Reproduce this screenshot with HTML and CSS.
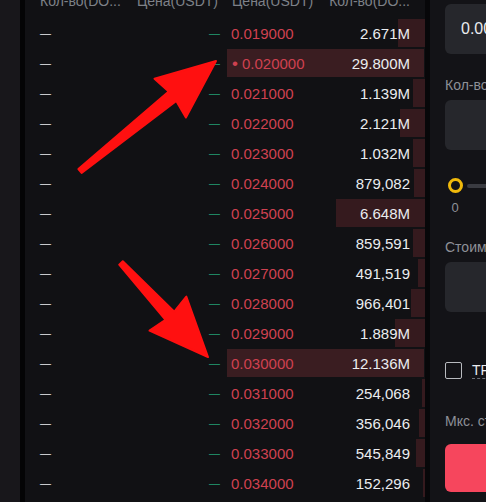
FILE: index.html
```html
<!DOCTYPE html>
<html lang="ru">
<head>
    <meta charset="UTF-8">
    <meta name="viewport" content="width=device-width, initial-scale=1.0">
    <title>Стакан DOGS/USDT</title>
    <link rel="stylesheet" href="styles.css">
</head>
<body>
    <div class="screen">
        <div class="edge"></div>
        <div class="edge-line"></div>

        <div class="book">
            <div class="book-head">
                <div class="head-bids"><span>Кол-во(DO...</span><span>Цена(USDT)</span></div>
                <div class="head-asks"><span>Цена(USDT)</span><span>Кол-во(DO...</span></div>
            </div>
            <div class="book-body">
                <div class="bids">
                    <div class="row"><span class="dash">—</span><span class="dash up">—</span></div>
                    <div class="row"><span class="dash">—</span><span class="dash up">—</span></div>
                    <div class="row"><span class="dash">—</span><span class="dash up">—</span></div>
                    <div class="row"><span class="dash">—</span><span class="dash up">—</span></div>
                    <div class="row"><span class="dash">—</span><span class="dash up">—</span></div>
                    <div class="row"><span class="dash">—</span><span class="dash up">—</span></div>
                    <div class="row"><span class="dash">—</span><span class="dash up">—</span></div>
                    <div class="row"><span class="dash">—</span><span class="dash up">—</span></div>
                    <div class="row"><span class="dash">—</span><span class="dash up">—</span></div>
                    <div class="row"><span class="dash">—</span><span class="dash up">—</span></div>
                    <div class="row"><span class="dash">—</span><span class="dash up">—</span></div>
                    <div class="row"><span class="dash">—</span><span class="dash up">—</span></div>
                    <div class="row"><span class="dash">—</span><span class="dash up">—</span></div>
                    <div class="row"><span class="dash">—</span><span class="dash up">—</span></div>
                    <div class="row"><span class="dash">—</span><span class="dash up">—</span></div>
                    <div class="row"><span class="dash">—</span><span class="dash up">—</span></div>
                </div>
                <div class="asks">
                    <div class="row"><i class="depth" style="width:27px"></i><span class="price">0.019000</span><span class="qty">2.671M</span></div>
                    <div class="row hit"><span class="price"><b class="mark">•</b>0.020000</span><span class="qty">29.800M</span></div>
                    <div class="row"><i class="depth" style="width:12px"></i><span class="price">0.021000</span><span class="qty">1.139M</span></div>
                    <div class="row"><i class="depth" style="width:25px"></i><span class="price">0.022000</span><span class="qty">2.121M</span></div>
                    <div class="row"><i class="depth" style="width:12px"></i><span class="price">0.023000</span><span class="qty">1.032M</span></div>
                    <div class="row"><i class="depth" style="width:11px"></i><span class="price">0.024000</span><span class="qty">879,082</span></div>
                    <div class="row"><i class="depth" style="width:89px"></i><span class="price">0.025000</span><span class="qty">6.648M</span></div>
                    <div class="row"><i class="depth" style="width:12px"></i><span class="price">0.026000</span><span class="qty">859,591</span></div>
                    <div class="row"><i class="depth" style="width:7px"></i><span class="price">0.027000</span><span class="qty">491,519</span></div>
                    <div class="row"><i class="depth" style="width:14px"></i><span class="price">0.028000</span><span class="qty">966,401</span></div>
                    <div class="row"><i class="depth" style="width:30px"></i><span class="price">0.029000</span><span class="qty">1.889M</span></div>
                    <div class="row hit"><span class="price">0.030000</span><span class="qty">12.136M</span></div>
                    <div class="row"><i class="depth" style="width:3px"></i><span class="price">0.031000</span><span class="qty">254,068</span></div>
                    <div class="row"><i class="depth" style="width:6px"></i><span class="price">0.032000</span><span class="qty">356,046</span></div>
                    <div class="row"><i class="depth" style="width:9px"></i><span class="price">0.033000</span><span class="qty">545,849</span></div>
                    <div class="row"><i class="depth" style="width:2px"></i><span class="price">0.034000</span><span class="qty">152,296</span></div>
                </div>
            </div>
        </div>

        <div class="divider"></div>

        <div class="panel">
            <div class="field">0.000000</div>
            <div class="label">Кол-во</div>
            <div class="field"></div>
            <div class="slider">
                <span class="knob"></span>
                <span class="track"></span>
            </div>
            <div class="tick">0</div>
            <div class="label">Стоимость</div>
            <div class="field"></div>
            <label class="check">
                <span class="box"></span>
                <span class="check-text">TP/SL</span>
            </label>
            <div class="label label-max">Мкс. стоимость</div>
            <div class="sell"></div>
        </div>
    </div>

    <!-- pointers drawn on top of the book -->
    <svg class="marks" width="486" height="502" viewBox="0 0 486 502">
        <polygon points="78.4,169.1 168.7,91.5 154.5,78.7 216,61 185.9,117.5 176.3,100.9 81.6,172.9" />
        <polygon points="119.2,264.7 165.5,319.9 149.5,330.6 208,357 186.3,296.6 174.3,311.7 122.8,261.3" />
    </svg>
</body>
</html>
```

FILE: styles.css
```css
* {
    box-sizing: border-box;
}
body {
    margin: 0;
    width: 486px;
    height: 502px;
    overflow: hidden;
    position: relative;
    background-color: #111114;
    font-family: "Liberation Sans", Arial, sans-serif;
}
.screen {
    display: flex;
    height: 502px;
}
.edge {
    width: 20px;
    flex: none;
    background-color: #18171b;
}
.edge-line {
    width: 5px;
    flex: none;
    background-color: #040405;
}

/* order book */
.book {
    width: 400px;
    flex: none;
}
.book-head {
    display: flex;
    height: 25px;
    margin-top: -7px;
    font-size: 14px;
    line-height: 16px;
    color: #7e8188;
    white-space: nowrap;
}
.head-bids {
    width: 202px;
    display: flex;
    justify-content: space-between;
    padding: 0 9px 0 15px;
}
.head-asks {
    width: 198px;
    display: flex;
    justify-content: space-between;
    padding: 0 15px 0 5px;
}
.book-body {
    display: flex;
}
.bids, .asks {
    display: flex;
    flex-direction: column;
}
.bids {
    width: 202px;
}
.asks {
    width: 198px;
}
.row {
    height: 30px;
    display: flex;
    align-items: center;
    justify-content: space-between;
    font-size: 15px;
}
.bids .row {
    padding: 0 7px 0 15px;
}
.asks .row {
    position: relative;
    padding: 0 15px 0 4px;
}
.dash {
    font-size: 11px;
    color: #eaecef;
}
.dash.up {
    color: #23a275;
}
.depth {
    position: absolute;
    right: 0;
    top: 1px;
    bottom: 1px;
    background-color: #351a1e;
}
.row.hit::before {
    content: "";
    position: absolute;
    left: 0;
    right: 1px;
    top: 1px;
    bottom: 1px;
    background-color: #3a1d21;
}
.price, .qty {
    position: relative;
}
.price {
    color: #cf4150;
}
.qty {
    color: #eaecef;
}
.mark {
    font-weight: normal;
    font-size: 17px;
    line-height: 15px;
    margin: 0 4px 0 1px;
}

/* order form */
.divider {
    width: 5px;
    flex: none;
    background-color: #070709;
}
.panel {
    flex: 1;
    min-width: 0;
    overflow: hidden;
    padding: 4px 0 0 15px;
    background-color: #131317;
    white-space: nowrap;
}
.field {
    width: 200px;
    height: 50px;
    display: flex;
    align-items: center;
    padding-left: 16px;
    border-radius: 6px;
    background-color: #26272c;
    font-size: 16px;
    color: #eaecef;
}
.label {
    margin: 23px 0 7px;
    font-size: 14px;
    line-height: 16px;
    color: #8e9097;
}
.slider {
    display: flex;
    align-items: center;
    width: 200px;
    margin-top: 28px;
    height: 15px;
}
.knob {
    flex: none;
    width: 15px;
    height: 15px;
    margin-left: 3px;
    border: 3px solid #f0b90b;
    border-radius: 50%;
    background-color: #131317;
}
.track {
    flex: none;
    width: 100px;
    height: 4px;
    margin-left: 4px;
    border-radius: 2px;
    background-color: #3a3b41;
}
.tick {
    width: 20px;
    margin-top: 7px;
    text-align: center;
    font-size: 13px;
    line-height: 16px;
    color: #8e9097;
}
.check {
    display: flex;
    align-items: center;
    width: 200px;
    height: 17px;
    margin-top: 50px;
}
.box {
    flex: none;
    width: 17px;
    height: 17px;
    border: 1px solid #b9bbc0;
    border-radius: 2px;
}
.check-text {
    margin-left: 10px;
    font-size: 14px;
    line-height: 16px;
    color: #eaecef;
    border-bottom: 1px dashed #6b6e75;
}
.label-max {
    margin: 34px 0 15px;
}
.sell {
    width: 200px;
    height: 48px;
    border-radius: 6px;
    background-color: #f6465d;
}

.marks {
    position: absolute;
    left: 0;
    top: 0;
    pointer-events: none;
}
.marks polygon {
    fill: #ff1010;
    stroke: #ff1010;
    stroke-width: 2;
    stroke-linejoin: round;
}
```
